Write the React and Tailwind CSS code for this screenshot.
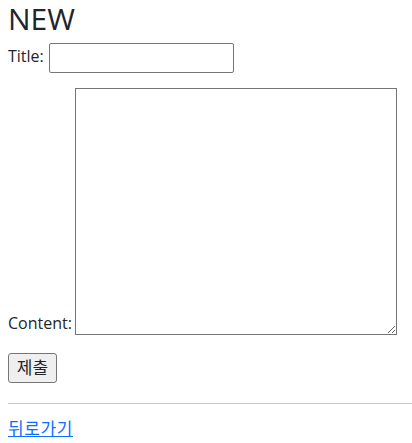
export default function App() {
  return (
    <div
      className="pl-[8px] text-[16px] leading-[1.5] text-[#212529] bg-white"
      style={{ fontFamily: '"Open Sans", "Noto Sans CJK KR", sans-serif' }}
    >
      <h1 className="text-[30px] leading-[38px] font-normal mb-[5px]">NEW</h1>
      <form>
        <div>
          <label className="mr-[5px]">Title:</label>
          <input
            type="text"
            className="w-[185px] h-[30px] border border-[#767676] rounded-[2px] px-[2px] align-middle"
          />
        </div>
        <div className="mt-[15px]">
          <label className="mr-[3px]">Content:</label>
          <textarea className="w-[322px] h-[247px] border border-[#767676] align-bottom resize" />
        </div>
        <div className="mt-[18px]">
          <button
            type="submit"
            className="w-[49px] h-[30px] bg-[#efefef] border border-[#767676] rounded-[3px] px-[6px] text-[17px]"
          >
            제출
          </button>
        </div>
      </form>
      <hr className="mt-[20px] mb-[12px] border-t border-[#212529] opacity-25" />
      <a href="#" className="text-[#0d6efd] underline text-[17px] tracking-[0.6px]">
        뒤로가기
      </a>
    </div>
  );
}
